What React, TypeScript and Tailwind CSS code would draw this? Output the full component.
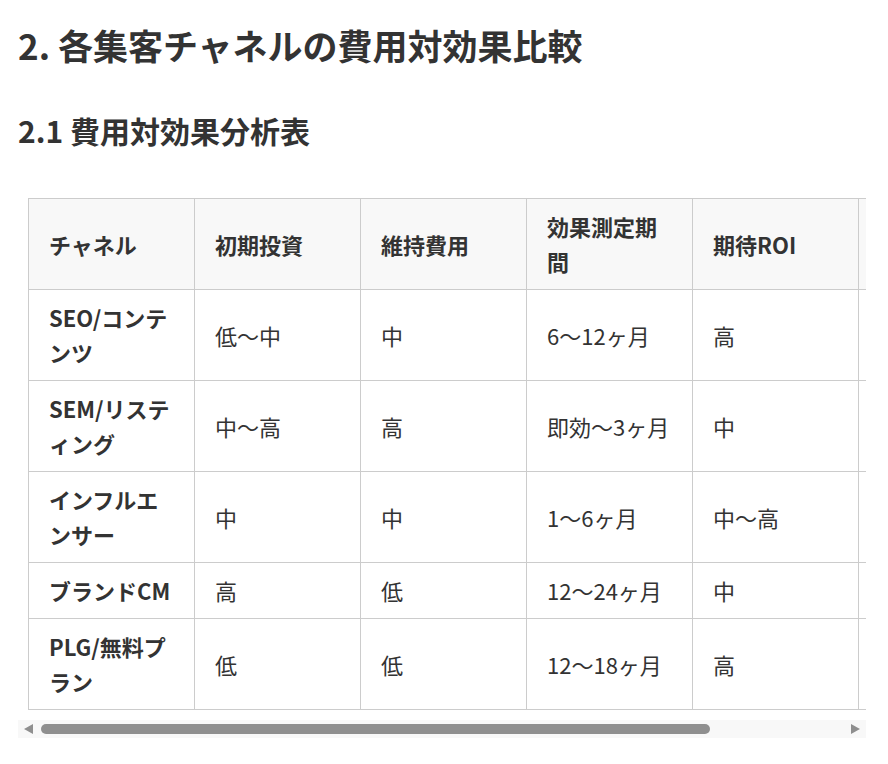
import React from "react";

const headers = ["チャネル", "初期投資", "維持費用", "効果測定期間", "期待ROI", "主なリスク"];
const rows: string[][] = [
  ["SEO/コンテンツ", "低〜中", "中", "6〜12ヶ月", "高", "アルゴリズム変動"],
  ["SEM/リスティング", "中〜高", "高", "即効〜3ヶ月", "中", "CPC高騰"],
  ["インフルエンサー", "中", "中", "1〜6ヶ月", "中〜高", "炎上リスク"],
  ["ブランドCM", "高", "低", "12〜24ヶ月", "中", "効果測定困難"],
  ["PLG/無料プラン", "低", "低", "12〜18ヶ月", "高", "収益化の遅れ"],
];

export default function App() {
  return (
    <div
      className="bg-white text-[#333333] pl-[18px] pr-[22px] pt-[24px] pb-[20px]"
      style={{ fontFamily: '"Noto Sans CJK JP", "Noto Sans", sans-serif' }}
    >
      <h1 className="text-[35px] font-bold leading-[42px]">2. 各集客チャネルの費用対効果比較</h1>
      <h2 className="mt-[46px] text-[30px] font-bold leading-[36px]">2.1 費用対効果分析表</h2>
      <div className="mt-[40px]">
        <div className="overflow-hidden">
          <table className="m-[10px] table-fixed border-collapse text-[22px] leading-[35px] w-[1017px]">
            <colgroup>
              <col className="w-[166px]" />
              <col className="w-[166px]" />
              <col className="w-[166px]" />
              <col className="w-[166px]" />
              <col className="w-[166px]" />
              <col className="w-[187px]" />
            </colgroup>
            <thead>
              <tr className="bg-[#f8f8f8]">
                {headers.map((h) => (
                  <th
                    key={h}
                    className="border border-[#cccccc] px-[20px] py-[10px] text-left align-middle font-bold"
                  >
                    {h}
                  </th>
                ))}
              </tr>
            </thead>
            <tbody>
              {rows.map((r) => (
                <tr key={r[0]}>
                  {r.map((c, i) =>
                    i === 0 ? (
                      <td
                        key={i}
                        className="border border-[#cccccc] px-[20px] py-[10px] text-left align-middle font-bold"
                      >
                        {c}
                      </td>
                    ) : (
                      <td
                        key={i}
                        className="border border-[#cccccc] px-[20px] py-[10px] text-left align-middle"
                      >
                        {c}
                      </td>
                    )
                  )}
                </tr>
              ))}
            </tbody>
          </table>
        </div>
        <div className="flex h-[18px] items-center bg-[#f8f8f8] px-[6px]">
          <svg width="9" height="10" viewBox="0 0 9 10" className="shrink-0">
            <polygon points="9,0 9,10 0,5" fill="#8f8f8f" />
          </svg>
          <div className="ml-[8px] h-[10px] w-[669px] rounded-full bg-[#8f8f8f]" />
          <div className="flex-1" />
          <svg width="9" height="10" viewBox="0 0 9 10" className="shrink-0">
            <polygon points="0,0 0,10 9,5" fill="#8f8f8f" />
          </svg>
        </div>
      </div>
    </div>
  );
}
